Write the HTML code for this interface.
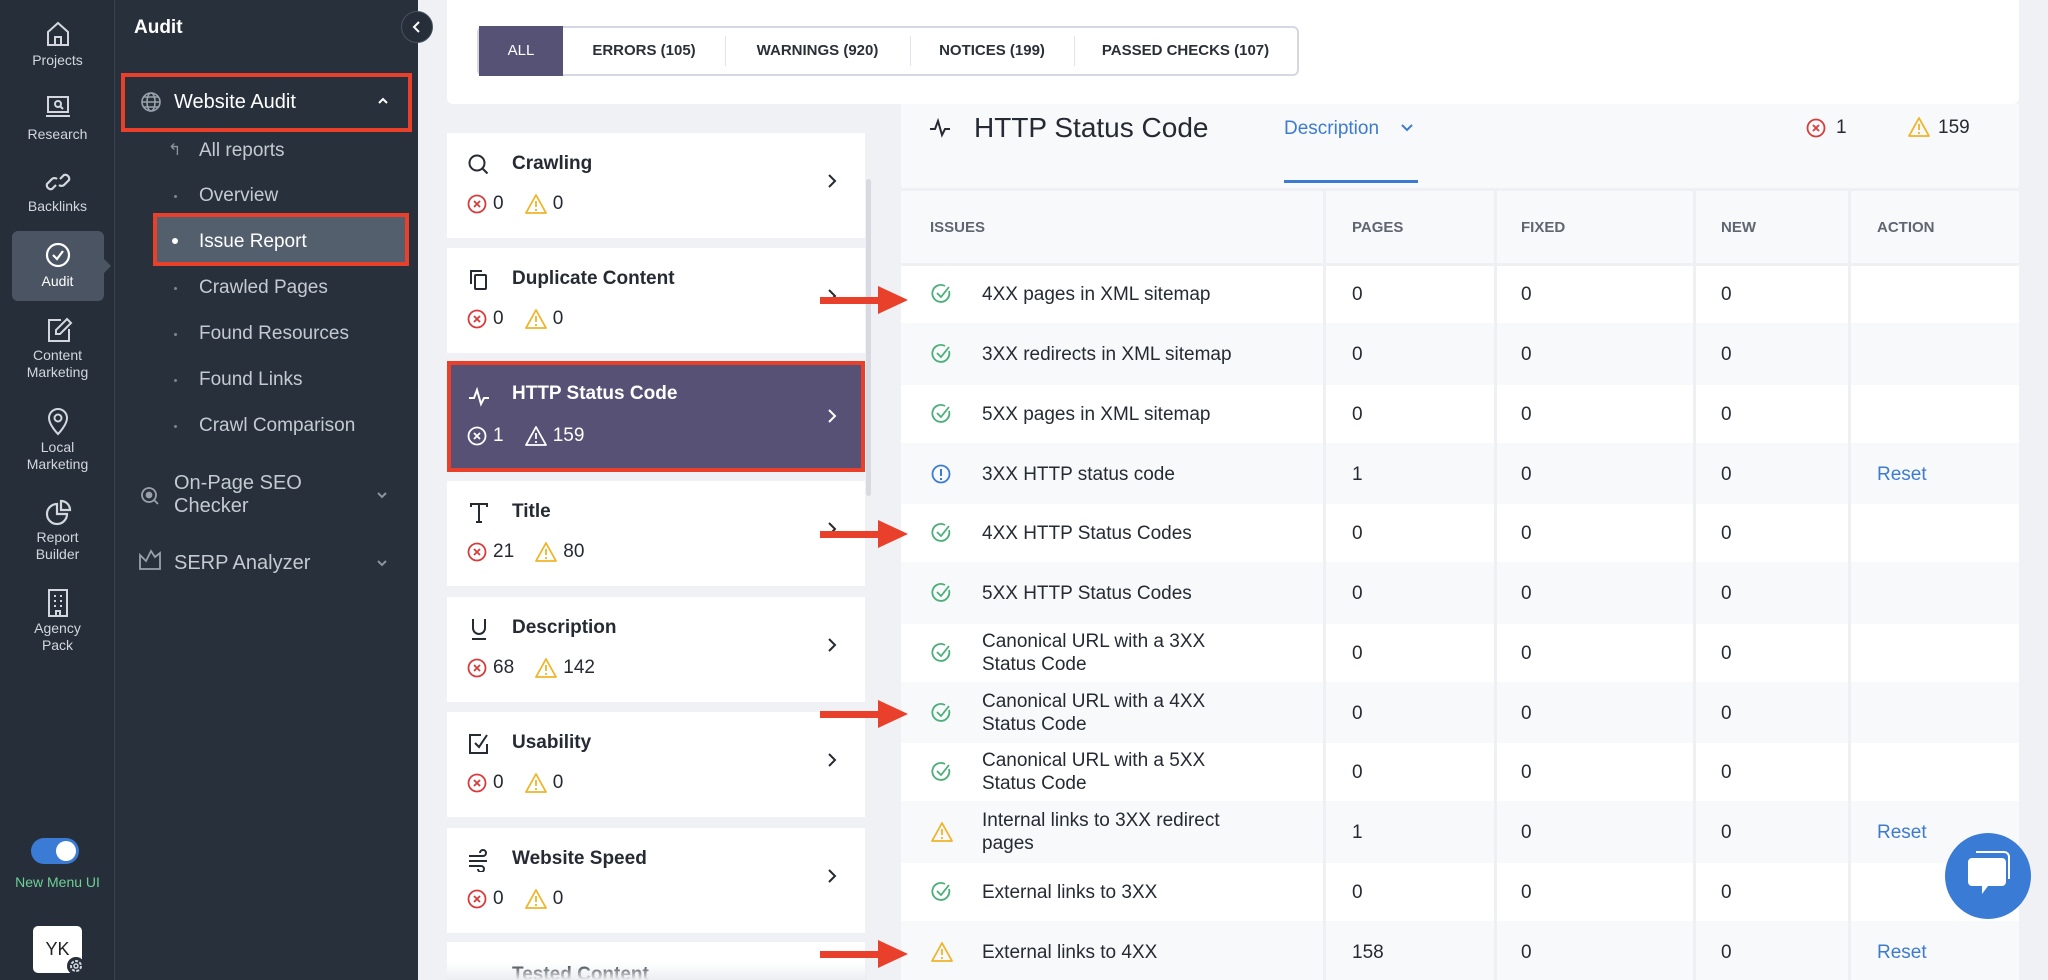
<!DOCTYPE html>
<html style="width:2048px;height:980px;overflow:hidden"><head><meta charset="utf-8"><style>
*{box-sizing:border-box;margin:0;padding:0}
body{width:2048px;height:980px;overflow:hidden;background:#f0f1f5;font-family:"Liberation Sans",sans-serif;position:relative}
.a{position:absolute}
.rail{left:0;top:0;width:115px;height:980px;background:#262e39;border-right:1px solid #3a424d}
.side{left:115px;top:0;width:303px;height:980px;background:#27303b}
.rl{position:absolute;left:0;width:115px;text-align:center;color:#d3d7dd;font-size:14px;line-height:17px}
.ri{position:absolute;left:45px}
.si{position:absolute;left:199px;color:#c5cad2;font-size:19px}
.dot{position:absolute;left:174px;width:3px;height:3px;border-radius:50%;background:#7d8591}
.card{position:absolute;left:447px;width:418px;height:105px;background:#fff}
.ct{position:absolute;left:65px;top:20px;font-size:19px;font-weight:bold;color:#252a33}
.ci{position:absolute;left:20px;top:20px}
.cc{position:absolute;left:20px;top:60px;font-size:19px;color:#252a33;display:flex;align-items:center}
.cc svg{margin-right:6px}
.chev{position:absolute;left:380px;top:40px}
.tab{position:absolute;top:26px;height:50px;line-height:50px;font-size:15px;font-weight:bold;color:#2b2f38;text-align:center}
.row{position:absolute;left:901px;width:1118px;height:58px;font-size:19px;color:#252a33}
.row div{position:absolute;top:0;height:58px;display:flex;align-items:center;line-height:23px}
.vl{position:absolute;width:3px;background:#eef0f4;top:190px;height:790px}
</style></head><body>
<div class="a rail"></div>
<div class="a side"></div>

<!-- rail -->
<svg class="ri" style="top:20px" width="26" height="28" viewBox="0 0 26 28" fill="none" stroke="#d3d7dd" stroke-width="2"><path d="M3 12L13 3l10 9v13H3z"/><path d="M10 25v-8h6v8"/></svg>
<div class="rl" style="top:52px">Projects</div>
<svg class="ri" style="top:94px" width="26" height="26" viewBox="0 0 26 26" fill="none" stroke="#d3d7dd" stroke-width="2"><rect x="3" y="3" width="20" height="15"/><path d="M1 22h24"/><circle cx="13" cy="10" r="3"/><path d="M15 12l3 3"/></svg>
<div class="rl" style="top:126px">Research</div>
<svg class="ri" style="top:168px" width="26" height="28" viewBox="0 0 26 28" fill="none" stroke="#d3d7dd" stroke-width="2.2"><path d="M11 17l-4 4a4 4 0 01-5-5l5-5a4 4 0 015 0"/><path d="M15 11l4-4a4 4 0 015 5l-5 5a4 4 0 01-5 0"/></svg>
<div class="rl" style="top:198px">Backlinks</div>
<div class="a" style="left:12px;top:231px;width:92px;height:70px;background:#4a5463;border-radius:6px"></div>
<div class="a" style="left:104px;top:259px;width:0;height:0;border-top:7px solid transparent;border-bottom:7px solid transparent;border-left:7px solid #4a5463"></div>
<svg class="ri" style="left:44px;top:241px" width="28" height="28" viewBox="0 0 28 28" fill="none" stroke="#fff" stroke-width="2.2"><circle cx="14" cy="14" r="11"/><path d="M9 14l4 4 6-8"/></svg>
<div class="rl" style="top:273px;color:#fff">Audit</div>
<svg class="ri" style="top:316px" width="28" height="28" viewBox="0 0 28 28" fill="none" stroke="#d3d7dd" stroke-width="2"><path d="M16 4H4v21h20V13"/><path d="M22 3l4 4-11 11H11v-4z"/></svg>
<div class="rl" style="top:347px">Content<br>Marketing</div>
<svg class="ri" style="top:406px" width="26" height="30" viewBox="0 0 26 30" fill="none" stroke="#d3d7dd" stroke-width="2"><path d="M13 28s9-9 9-16a9 9 0 00-18 0c0 7 9 16 9 16z"/><circle cx="13" cy="12" r="3.5"/></svg>
<div class="rl" style="top:439px">Local<br>Marketing</div>
<svg class="ri" style="top:498px" width="28" height="28" viewBox="0 0 28 28" fill="none" stroke="#d3d7dd" stroke-width="2.2"><path d="M12 6a10 10 0 1010 10H12z"/><path d="M16 3a9 9 0 019 9h-9z"/></svg>
<div class="rl" style="top:529px">Report<br>Builder</div>
<svg class="ri" style="top:588px" width="26" height="30" viewBox="0 0 26 30" fill="none" stroke="#d3d7dd" stroke-width="2"><rect x="4" y="2" width="18" height="26"/><path d="M9 8h2M15 8h2M9 13h2M15 13h2M9 18h2M15 18h2M11 28v-5h4v5"/></svg>
<div class="rl" style="top:620px">Agency<br>Pack</div>
<div class="a" style="left:31px;top:838px;width:48px;height:26px;border-radius:13px;background:#3a7bd5"></div>
<div class="a" style="left:56px;top:841px;width:20px;height:20px;border-radius:50%;background:#fff"></div>
<div class="rl" style="top:874px;color:#6fcf97;font-size:14px">New Menu UI</div>
<div class="a" style="left:33px;top:926px;width:49px;height:47px;background:#fff;border-radius:5px;text-align:center;line-height:47px;font-size:18px;color:#222">YK</div>
<svg class="a" style="left:66px;top:956px" width="20" height="20" viewBox="0 0 20 20"><circle cx="10" cy="10" r="9" fill="#262e39"/><circle cx="10" cy="10" r="5" fill="none" stroke="#d3d7dd" stroke-width="2" stroke-dasharray="3 1.5"/><circle cx="10" cy="10" r="2" fill="none" stroke="#d3d7dd" stroke-width="1.5"/></svg>

<!-- second sidebar -->
<div class="a" style="left:134px;top:17px;color:#fff;font-size:19px;font-weight:bold">Audit</div>
<div class="a" style="left:401px;top:11px;width:32px;height:32px;border-radius:50%;background:#262e39;border:1px solid #4a5260"></div>
<svg class="a" style="left:411px;top:20px" width="12" height="14" viewBox="0 0 12 14" fill="none" stroke="#fff" stroke-width="2"><path d="M8 2L3 7l5 5"/></svg>
<div class="a" style="left:121px;top:73px;width:291px;height:59px;border:4px solid #e8402a"></div>
<svg class="a" style="left:140px;top:91px" width="22" height="22" viewBox="0 0 22 22" fill="none" stroke="#9aa1ab" stroke-width="1.6"><circle cx="11" cy="11" r="9"/><ellipse cx="11" cy="11" rx="4" ry="9"/><path d="M2 11h18M4 6h14M4 16h14"/></svg>
<div class="a" style="left:174px;top:91px;color:#fff;font-size:20px">Website Audit</div>
<svg class="a" style="left:377px;top:96px" width="12" height="10" viewBox="0 0 12 10" fill="none" stroke="#fff" stroke-width="2"><path d="M2 7l4-4 4 4"/></svg>
<div class="a" style="left:168px;top:140px;color:#8d949e;font-size:16px">↰</div>
<div class="si" style="top:140px">All reports</div>
<div class="dot" style="top:195px"></div><div class="si" style="top:185px">Overview</div>
<div class="a" style="left:153px;top:213px;width:256px;height:53px;border:4px solid #e8402a;background:#545f6e"></div>
<div class="a" style="left:172px;top:238px;width:6px;height:6px;border-radius:50%;background:#fff"></div>
<div class="si" style="top:231px;color:#fff">Issue Report</div>
<div class="dot" style="top:287px"></div><div class="si" style="top:277px">Crawled Pages</div>
<div class="dot" style="top:333px"></div><div class="si" style="top:323px">Found Resources</div>
<div class="dot" style="top:379px"></div><div class="si" style="top:369px">Found Links</div>
<div class="dot" style="top:425px"></div><div class="si" style="top:415px">Crawl Comparison</div>
<svg class="a" style="left:140px;top:485px" width="20" height="22" viewBox="0 0 20 22" fill="none" stroke="#9aa1ab" stroke-width="1.8"><circle cx="9" cy="10" r="7"/><circle cx="9" cy="10" r="2.5" fill="#9aa1ab"/><path d="M14 15l4 4"/></svg>
<div class="a" style="left:174px;top:472px;color:#c5cad2;font-size:20px;line-height:23px">On-Page SEO<br>Checker</div>
<svg class="a" style="left:376px;top:490px" width="12" height="10" viewBox="0 0 12 10" fill="none" stroke="#8d949e" stroke-width="2"><path d="M2 3l4 4 4-4"/></svg>
<svg class="a" style="left:138px;top:549px" width="24" height="22" viewBox="0 0 24 22" fill="none" stroke="#9aa1ab" stroke-width="1.8"><path d="M2 20V6l6 6 5-10 4 6 5-4v16z"/></svg>
<div class="a" style="left:174px;top:552px;color:#c5cad2;font-size:20px">SERP Analyzer</div>
<svg class="a" style="left:376px;top:558px" width="12" height="10" viewBox="0 0 12 10" fill="none" stroke="#8d949e" stroke-width="2"><path d="M2 3l4 4 4-4"/></svg>

<!-- top panel -->
<div class="a" style="left:447px;top:0;width:1572px;height:104px;background:#fff;border-radius:0 0 6px 6px"></div>
<div class="a" style="left:477px;top:26px;width:822px;height:50px;border:2px solid #d5d8e0;border-radius:6px"></div>
<div class="tab" style="left:479px;width:84px;background:#565276;color:#fff;font-weight:normal">ALL</div>
<div class="tab" style="left:563px;width:162px">ERRORS (105)</div>
<div class="a" style="left:725px;top:36px;width:1px;height:30px;background:#e2e4ea"></div>
<div class="tab" style="left:725px;width:185px">WARNINGS (920)</div>
<div class="a" style="left:910px;top:36px;width:1px;height:30px;background:#e2e4ea"></div>
<div class="tab" style="left:910px;width:164px">NOTICES (199)</div>
<div class="a" style="left:1074px;top:36px;width:1px;height:30px;background:#e2e4ea"></div>
<div class="tab" style="left:1074px;width:223px">PASSED CHECKS (107)</div>

<!-- cards -->
<svg width="0" height="0" style="position:absolute"><defs>
<g id="err"><circle cx="10" cy="11" r="8.5" fill="none" stroke="#d93b3b" stroke-width="1.8"/><path d="M7 8l6 6M13 8l-6 6" stroke="#d93b3b" stroke-width="1.8"/></g>
<g id="errw"><circle cx="10" cy="11" r="8.5" fill="none" stroke="#fff" stroke-width="1.8"/><path d="M7 8l6 6M13 8l-6 6" stroke="#fff" stroke-width="1.8"/></g>
<g id="wrn"><path d="M11 2L1 20h20z" fill="none" stroke="#f0b429" stroke-width="1.8" stroke-linejoin="round"/><path d="M11 8v6M11 16v2" stroke="#f0b429" stroke-width="1.8"/></g>
<g id="wrnw"><path d="M11 2L1 20h20z" fill="none" stroke="#fff" stroke-width="1.8" stroke-linejoin="round"/><path d="M11 8v6M11 16v2" stroke="#fff" stroke-width="1.8"/></g>
<g id="chk"><path d="M18 8A8.5 8.5 0 1 1 14 3" fill="none" stroke="#4caf7a" stroke-width="1.8"/><path d="M6 10l4 4 8-10" fill="none" stroke="#4caf7a" stroke-width="1.8"/></g>
<g id="inf"><circle cx="10" cy="10" r="8.5" fill="none" stroke="#3a7bd5" stroke-width="1.8"/><path d="M10 5v7M10 14v2" stroke="#3a7bd5" stroke-width="2"/></g>
<g id="chv"><path d="M2 2l6 6-6 6" fill="none" stroke="#252a33" stroke-width="2"/></g>
</defs></svg>

<div class="card" style="top:133px"><svg class="ci" width="24" height="24" viewBox="0 0 24 24" fill="none" stroke="#252a33" stroke-width="2"><circle cx="10" cy="10" r="7.5"/><path d="M15.5 15.5l5 5"/></svg><div class="ct">Crawling</div><div class="cc"><svg width="20" height="22"><use href="#err"/></svg>0&nbsp;&nbsp;&nbsp;&nbsp;<svg width="22" height="22"><use href="#wrn"/></svg>0</div><svg class="chev" width="10" height="16"><use href="#chv"/></svg></div>
<div class="card" style="top:248px"><svg class="ci" width="24" height="24" viewBox="0 0 24 24" fill="none" stroke="#252a33" stroke-width="2"><path d="M4 16V3h11"/><rect x="8" y="7" width="11" height="14" rx="1"/></svg><div class="ct">Duplicate Content</div><div class="cc"><svg width="20" height="22"><use href="#err"/></svg>0&nbsp;&nbsp;&nbsp;&nbsp;<svg width="22" height="22"><use href="#wrn"/></svg>0</div><svg class="chev" width="10" height="16"><use href="#chv"/></svg></div>
<div class="card" style="top:361px;height:111px;background:#e8402a"><div class="a" style="left:4px;top:4px;width:410px;height:103px;background:#575175"></div>
<svg class="ci" style="top:24px" width="24" height="24" viewBox="0 0 24 24" fill="none" stroke="#fff" stroke-width="2"><path d="M2 13h5l3-8 4 14 3-6h5"/></svg><div class="ct" style="color:#fff;top:22px">HTTP Status Code</div><div class="cc" style="color:#fff;top:64px"><svg width="20" height="22"><use href="#errw"/></svg>1&nbsp;&nbsp;&nbsp;&nbsp;<svg width="22" height="22"><use href="#wrnw"/></svg>159</div><svg class="chev" style="top:47px" width="10" height="16" viewBox="0 0 10 16"><path d="M2 2l6 6-6 6" fill="none" stroke="#fff" stroke-width="2"/></svg></div>
<div class="card" style="top:481px"><svg class="ci" width="24" height="24" viewBox="0 0 24 24" fill="none" stroke="#252a33" stroke-width="2"><path d="M4 6V3h16v3M12 3v18M9 21h6"/></svg><div class="ct">Title</div><div class="cc"><svg width="20" height="22"><use href="#err"/></svg>21&nbsp;&nbsp;&nbsp;&nbsp;<svg width="22" height="22"><use href="#wrn"/></svg>80</div><svg class="chev" width="10" height="16"><use href="#chv"/></svg></div>
<div class="card" style="top:597px"><svg class="ci" width="24" height="24" viewBox="0 0 24 24" fill="none" stroke="#252a33" stroke-width="2"><path d="M6 2v9a6 6 0 0012 0V2M5 22h14"/></svg><div class="ct">Description</div><div class="cc"><svg width="20" height="22"><use href="#err"/></svg>68&nbsp;&nbsp;&nbsp;&nbsp;<svg width="22" height="22"><use href="#wrn"/></svg>142</div><svg class="chev" width="10" height="16"><use href="#chv"/></svg></div>
<div class="card" style="top:712px"><svg class="ci" width="24" height="24" viewBox="0 0 24 24" fill="none" stroke="#252a33" stroke-width="2"><path d="M14 3H3v18h17v-9"/><path d="M8 11l4 4 8-12"/></svg><div class="ct">Usability</div><div class="cc"><svg width="20" height="22"><use href="#err"/></svg>0&nbsp;&nbsp;&nbsp;&nbsp;<svg width="22" height="22"><use href="#wrn"/></svg>0</div><svg class="chev" width="10" height="16"><use href="#chv"/></svg></div>
<div class="card" style="top:828px"><svg class="ci" width="24" height="24" viewBox="0 0 24 24" fill="none" stroke="#252a33" stroke-width="2"><path d="M2 8h14a3 3 0 10-3-3M2 13h18M2 18h12a3 3 0 11-3 3"/></svg><div class="ct">Website Speed</div><div class="cc"><svg width="20" height="22"><use href="#err"/></svg>0&nbsp;&nbsp;&nbsp;&nbsp;<svg width="22" height="22"><use href="#wrn"/></svg>0</div><svg class="chev" width="10" height="16"><use href="#chv"/></svg></div>
<div class="card" style="top:942px;height:38px;overflow:hidden"><div class="ct" style="top:22px">Tested Content</div></div>
<div class="a" style="left:447px;top:962px;width:420px;height:18px;background:linear-gradient(rgba(240,241,245,0),#eceef2)"></div>
<div class="a" style="left:866px;top:179px;width:5px;height:317px;border-radius:3px;background:#d7dae0"></div>

<!-- right panel -->
<div class="a" style="left:901px;top:104px;width:1118px;height:876px;background:#f8f9fb"></div>
<svg class="a" style="left:928px;top:116px" width="24" height="24" viewBox="0 0 24 24" fill="none" stroke="#252a33" stroke-width="2"><path d="M2 13h5l3-8 4 14 3-6h5"/></svg>
<div class="a" style="left:974px;top:112px;font-size:28px;color:#252a33">HTTP Status Code</div>
<div class="a" style="left:1284px;top:118px;font-size:19px;color:#3d7bd1">Description</div>
<svg class="a" style="left:1400px;top:122px" width="14" height="12" viewBox="0 0 14 12" fill="none" stroke="#3d7bd1" stroke-width="2"><path d="M2 3l5 5 5-5"/></svg>
<div class="a" style="left:1284px;top:180px;width:134px;height:3px;background:#3d7bd1"></div>
<svg class="a" style="left:1806px;top:117px" width="20" height="22"><use href="#err"/></svg>
<div class="a" style="left:1836px;top:117px;font-size:19px;color:#252a33">1</div>
<svg class="a" style="left:1908px;top:116px" width="22" height="22"><use href="#wrn"/></svg>
<div class="a" style="left:1938px;top:117px;font-size:19px;color:#252a33">159</div>
<div class="a" style="left:901px;top:188px;width:1118px;height:3px;background:#eef0f4"></div>

<div class="row" style="top:190px;height:75px;color:#5f6672;font-size:15px;font-weight:bold"><div style="left:29px;height:75px">ISSUES</div><div style="left:451px;height:75px">PAGES</div><div style="left:620px;height:75px">FIXED</div><div style="left:820px;height:75px">NEW</div><div style="left:976px;height:75px">ACTION</div></div>

<div class="row" style="top:265px;background:#fff"><div style="left:30px"><svg width="22" height="22"><use href="#chk"/></svg></div><div style="left:81px">4XX pages in XML sitemap</div><div style="left:451px">0</div><div style="left:620px">0</div><div style="left:820px">0</div></div>
<div class="row" style="top:325px;background:#f8f9fb"><div style="left:30px"><svg width="22" height="22"><use href="#chk"/></svg></div><div style="left:81px">3XX redirects in XML sitemap</div><div style="left:451px">0</div><div style="left:620px">0</div><div style="left:820px">0</div></div>
<div class="row" style="top:385px;background:#fff"><div style="left:30px"><svg width="22" height="22"><use href="#chk"/></svg></div><div style="left:81px">5XX pages in XML sitemap</div><div style="left:451px">0</div><div style="left:620px">0</div><div style="left:820px">0</div></div>
<div class="row" style="top:445px;background:#f8f9fb"><div style="left:30px"><svg width="20" height="20"><use href="#inf"/></svg></div><div style="left:81px">3XX HTTP status code</div><div style="left:451px">1</div><div style="left:620px">0</div><div style="left:820px">0</div><div style="left:976px;color:#3d7bd1">Reset</div></div>
<div class="row" style="top:504px;background:#fff"><div style="left:30px"><svg width="22" height="22"><use href="#chk"/></svg></div><div style="left:81px">4XX HTTP Status Codes</div><div style="left:451px">0</div><div style="left:620px">0</div><div style="left:820px">0</div></div>
<div class="row" style="top:564px;background:#f8f9fb"><div style="left:30px"><svg width="22" height="22"><use href="#chk"/></svg></div><div style="left:81px">5XX HTTP Status Codes</div><div style="left:451px">0</div><div style="left:620px">0</div><div style="left:820px">0</div></div>
<div class="row" style="top:624px;background:#fff"><div style="left:30px"><svg width="22" height="22"><use href="#chk"/></svg></div><div style="left:81px">Canonical URL with a 3XX<br>Status Code</div><div style="left:451px">0</div><div style="left:620px">0</div><div style="left:820px">0</div></div>
<div class="row" style="top:684px;background:#f8f9fb"><div style="left:30px"><svg width="22" height="22"><use href="#chk"/></svg></div><div style="left:81px">Canonical URL with a 4XX<br>Status Code</div><div style="left:451px">0</div><div style="left:620px">0</div><div style="left:820px">0</div></div>
<div class="row" style="top:743px;background:#fff"><div style="left:30px"><svg width="22" height="22"><use href="#chk"/></svg></div><div style="left:81px">Canonical URL with a 5XX<br>Status Code</div><div style="left:451px">0</div><div style="left:620px">0</div><div style="left:820px">0</div></div>
<div class="row" style="top:803px;background:#f8f9fb"><div style="left:30px"><svg width="22" height="22"><use href="#wrn"/></svg></div><div style="left:81px">Internal links to 3XX redirect<br>pages</div><div style="left:451px">1</div><div style="left:620px">0</div><div style="left:820px">0</div><div style="left:976px;color:#3d7bd1">Reset</div></div>
<div class="row" style="top:863px;background:#fff"><div style="left:30px"><svg width="22" height="22"><use href="#chk"/></svg></div><div style="left:81px">External links to 3XX</div><div style="left:451px">0</div><div style="left:620px">0</div><div style="left:820px">0</div></div>
<div class="row" style="top:923px;height:57px;background:#f8f9fb"><div style="left:30px"><svg width="22" height="22"><use href="#wrn"/></svg></div><div style="left:81px">External links to 4XX</div><div style="left:451px">158</div><div style="left:620px">0</div><div style="left:820px">0</div><div style="left:976px;color:#3d7bd1">Reset</div></div>

<div class="vl" style="left:1323px"></div>
<div class="vl" style="left:1494px"></div>
<div class="vl" style="left:1693px"></div>
<div class="vl" style="left:1848px"></div>
<div class="a" style="left:901px;top:263px;width:1118px;height:3px;background:#eef0f4"></div>
<div class="a" style="left:2019px;top:104px;width:29px;height:876px;background:#f0f1f5"></div>

<!-- arrows -->
<svg class="a" style="left:0;top:0" width="2048" height="980">
<g fill="#e8402a">
<rect x="820" y="297" width="62" height="7"/><path d="M878 286L908 300L878 314z"/>
<rect x="820" y="531" width="62" height="7"/><path d="M878 520L908 534L878 548z"/>
<rect x="820" y="711" width="62" height="7"/><path d="M878 700L908 714L878 728z"/>
<rect x="820" y="951" width="62" height="7"/><path d="M878 940L908 954L878 968z"/>
</g>
<circle cx="1988" cy="876" r="43" fill="#3a7bd5"/>
<path d="M1972 858h30a4 4 0 014 4v20a4 4 0 01-4 4h-14l-6 8v-8h-10a4 4 0 01-4-4v-20a4 4 0 014-4z" fill="#fff"/>
<path d="M1976 852h28a5 5 0 015 5v22" fill="none" stroke="#fff" stroke-width="2"/>
</svg>
</body></html>
